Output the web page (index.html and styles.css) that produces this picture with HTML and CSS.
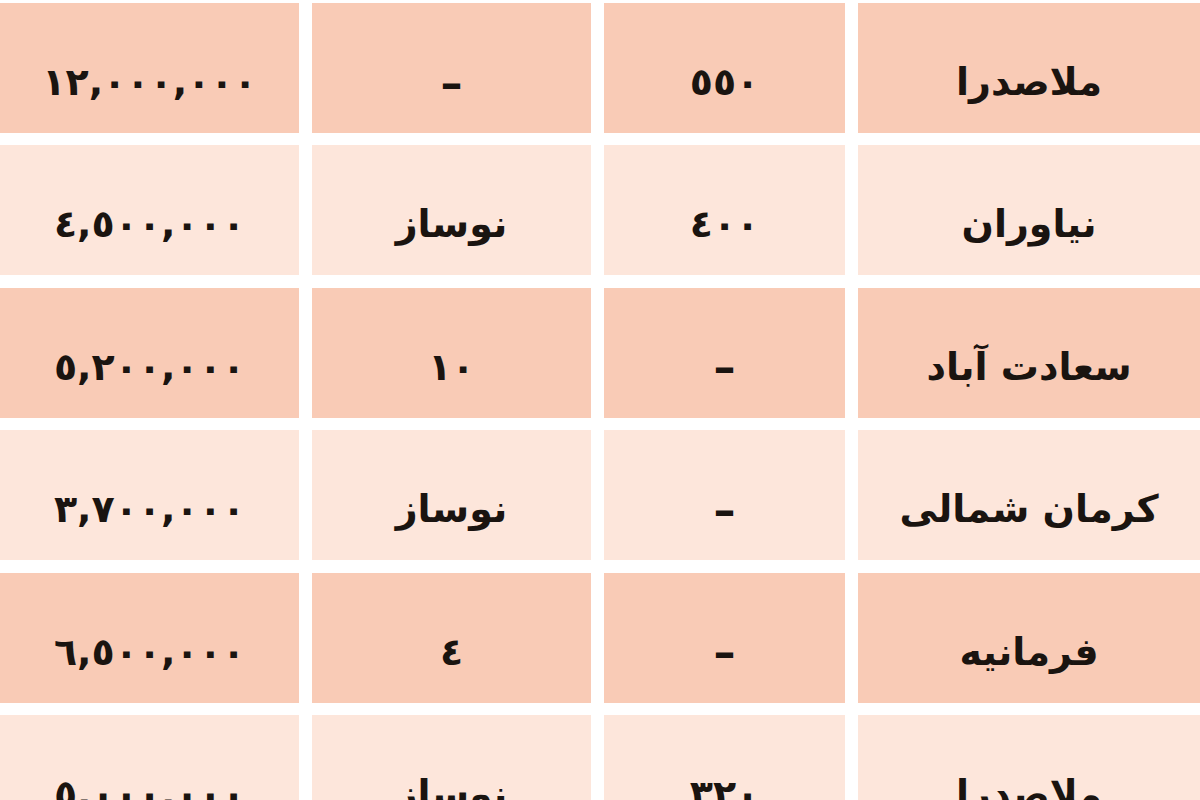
FILE: index.html
```html
<!DOCTYPE html>
<html lang="fa" dir="rtl">
<head>
<meta charset="utf-8">
<title>قیمت مسکن</title>
<link rel="stylesheet" href="styles.css">
</head>
<body>
<div class="table">
  <div class="cell dark">ملاصدرا</div>
  <div class="cell dark num">٥٥٠</div>
  <div class="cell dark dash">–</div>
  <div class="cell dark num">١٢,٠٠٠,٠٠٠</div>

  <div class="cell light">نیاوران</div>
  <div class="cell light num">٤٠٠</div>
  <div class="cell light">نوساز</div>
  <div class="cell light num">٤,٥٠٠,٠٠٠</div>

  <div class="cell dark">سعادت آباد</div>
  <div class="cell dark dash">–</div>
  <div class="cell dark num">١٠</div>
  <div class="cell dark num">٥,٢٠٠,٠٠٠</div>

  <div class="cell light">کرمان شمالی</div>
  <div class="cell light dash">–</div>
  <div class="cell light">نوساز</div>
  <div class="cell light num">٣,٧٠٠,٠٠٠</div>

  <div class="cell dark">فرمانیه</div>
  <div class="cell dark dash">–</div>
  <div class="cell dark num">٤</div>
  <div class="cell dark num">٦,٥٠٠,٠٠٠</div>

  <div class="cell light">ملاصدرا</div>
  <div class="cell light num">٣٢٠</div>
  <div class="cell light">نوساز</div>
  <div class="cell light num">٥,٠٠٠,٠٠٠</div>
</div>
</body>
</html>
```
FILE: styles.css
```css
html, body {
  margin: 0;
  padding: 0;
  background: #ffffff;
}

body {
  width: 1200px;
  height: 800px;
  overflow: hidden;
  font-family: "DejaVu Sans", sans-serif;
  color: #1a1410;
}

.table {
  display: grid;
  grid-template-columns: 342px 241px 279px 299px;
  grid-auto-rows: 130px;
  column-gap: 13px;
  row-gap: 12.4px;
  padding-top: 3px;
}

.cell {
  display: flex;
  align-items: center;
  justify-content: center;
  padding-top: 28px;
  box-sizing: border-box;
  font-size: 38px;
  font-weight: bold;
  white-space: nowrap;
}

.num {
  letter-spacing: 3px;
}

.dash {
  font-size: 44px;
}

.dark {
  background: #f9cbb6;
}

.light {
  background: #fde6db;
}
```
